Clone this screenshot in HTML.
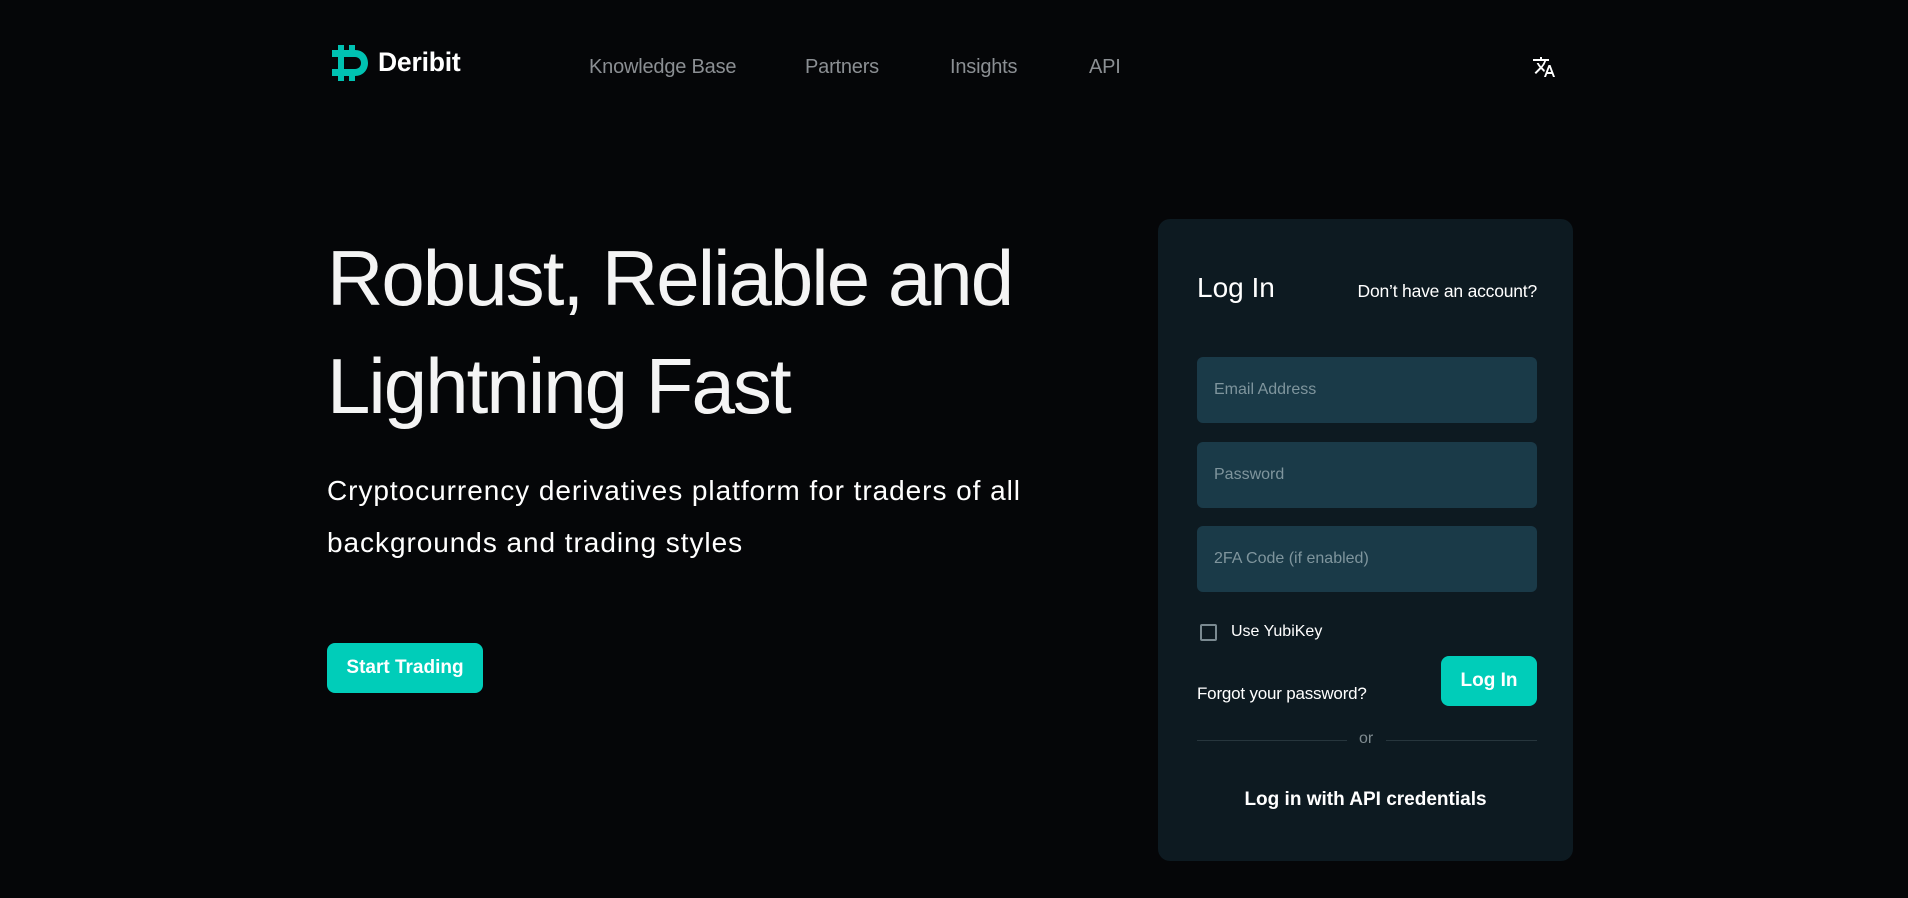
<!DOCTYPE html>
<html><head><meta charset="utf-8"><style>
*{margin:0;padding:0;box-sizing:border-box}
body{width:1908px;height:898px;background:#050608;font-family:"Liberation Sans",sans-serif;color:#fff;position:relative;overflow:hidden}
.a{position:absolute;white-space:nowrap}
.nav{color:#8b8f93;font-size:20px;letter-spacing:-0.2px;top:56px}
.h1{left:327px;font-size:78px;letter-spacing:-1.95px;color:#f4f4f4}
.sub{left:327px;font-size:28px;letter-spacing:0.95px}
.card{left:1158px;top:219px;width:415px;height:642px;background:#0d1a21;border-radius:12px}
.inp{left:1197px;width:340px;height:66px;background:#1a3a48;border-radius:6px;color:#7f959d;font-size:16px;padding-left:17px;line-height:66px}
.btn{background:#00cdb9;border-radius:8px;font-weight:bold;text-align:center;color:#fff}
</style></head><body>
<svg class="a" style="left:332px;top:45px" width="38" height="36" viewBox="0 0 38 36">
<path fill="#00c2b2" d="M6 0h6v5h5V0h6v5c8 0 13 6 13 13s-5 13-13 13v5h-6v-5h-5v5H6v-5H0v-7h6V12H0V5h6zM12 12v12h11c3.5 0 6-2.5 6-6s-2.5-6-6-6z"/>
</svg>
<div class="a" style="left:378px;top:47px;font-size:26.5px;font-weight:bold;letter-spacing:-0.2px">Deribit</div>
<div class="a nav" style="left:589px">Knowledge Base</div>
<div class="a nav" style="left:805px">Partners</div>
<div class="a nav" style="left:950px">Insights</div>
<div class="a nav" style="left:1089px">API</div>
<svg class="a" style="left:1532px;top:55px" width="24" height="24" viewBox="0 0 24 24"><path fill="#fff" d="M12.87 15.070l-2.54-2.51.03-.03A17.52 17.52 0 0014.07 6H17V4h-7V2H8v2H1v2h11.17C11.5 7.92 10.44 9.75 9 11.35 8.07 10.32 7.3 9.19 6.690 8h-2c.73 1.63 1.73 3.17 2.98 4.56l-5.09 5.02L4 19l5-5 3.11 3.11.76-2.04zM18.5 10h-2L12 22h2l1.12-3h4.75L21 22h2l-4.5-12zm-2.62 7l1.62-4.33L19.12 17h-3.24z"/></svg>

<div class="a h1" style="top:233px">Robust, Reliable and</div>
<div class="a h1" style="top:341px">Lightning Fast</div>
<div class="a sub" style="top:475px">Cryptocurrency derivatives platform for traders of all</div>
<div class="a sub" style="top:527px">backgrounds and trading styles</div>
<div class="a btn" style="left:327px;top:643px;width:156px;height:50px;line-height:50px;font-size:19px">Start Trading</div>

<div class="a card"></div>
<div class="a" style="left:1197px;top:272px;font-size:28px">Log In</div>
<div class="a" style="right:371px;top:281px;font-size:17.5px;letter-spacing:-0.2px">Don’t have an account?</div>
<div class="a inp" style="top:357px">Email Address</div>
<div class="a inp" style="top:442px">Password</div>
<div class="a inp" style="top:526px">2FA Code (if enabled)</div>
<div class="a" style="left:1200px;top:624px;width:17px;height:17px;border:2px solid #7a8a91;border-radius:2px"></div>
<div class="a" style="left:1231px;top:623px;font-size:16px">Use YubiKey</div>
<div class="a btn" style="left:1441px;top:656px;width:96px;height:50px;line-height:50px;font-size:19px">Log In</div>
<div class="a" style="left:1197px;top:684px;font-size:17px;letter-spacing:-0.2px">Forgot your password?</div>
<div class="a" style="left:1197px;top:740px;width:150px;height:1px;background:#27363d"></div>
<div class="a" style="left:1386px;top:740px;width:151px;height:1px;background:#27363d"></div>
<div class="a" style="left:1359px;top:730px;font-size:16px;color:#7f8b90">or</div>
<div class="a" style="left:1158px;width:415px;top:789px;text-align:center;font-size:19px;font-weight:bold">Log in with API credentials</div>
</body></html>
